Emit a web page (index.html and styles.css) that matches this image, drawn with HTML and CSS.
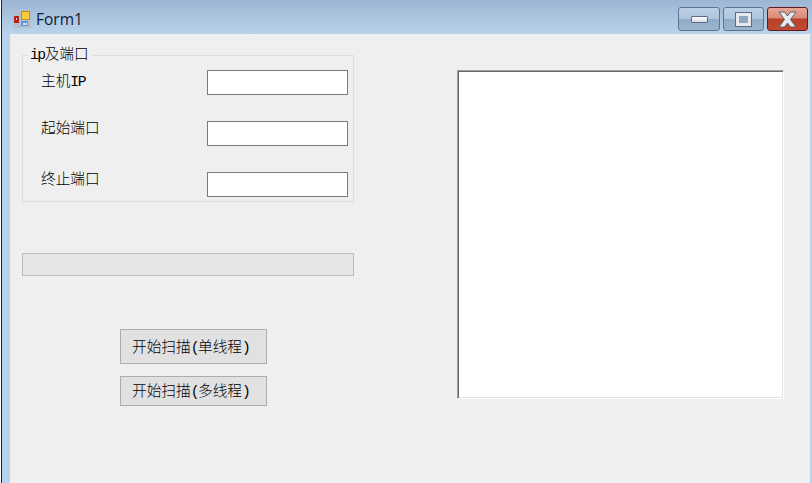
FILE: index.html
```html
<!DOCTYPE html>
<html lang="en">
  <head>
    <meta charset="UTF-8" />
    <title>Form1</title>
    <link rel="stylesheet" href="styles.css">
  </head>
  <body>
    <div class="window">
      <div class="titlebar">
        <svg class="app-icon" width="18" height="18" viewBox="0 0 18 18">
          <rect x="0" y="0" width="18" height="18" fill="#b4bfcc" />
          <rect x="1" y="6" width="5" height="7" fill="#b3231b" />
          <rect x="3" y="8" width="1" height="2" fill="#f2c8b0" />
          <rect x="8.5" y="1.5" width="8" height="8" fill="#f5cc3c" stroke="#c08f2a" stroke-width="1" />
          <rect x="8" y="11" width="7" height="5" fill="#5f95e0" />
          <rect x="10" y="13" width="4" height="2" fill="#cfe0f6" />
        </svg>
        <span class="title">Form1</span>
        <div class="controls">
          <div class="ctl">
            <span class="ctl-min"></span>
          </div>
          <div class="ctl">
            <span class="ctl-max"></span>
          </div>
          <div class="ctl ctl-close">
            <svg width="19" height="17" viewBox="0 0 19 17">
              <path d="M1 1h5.5l3 4 3-4H18l-5.5 7.5L18 16h-5.5l-3-4-3 4H1l5.5-7.5z" fill="#e9ebef" stroke="#566074" stroke-width="1" stroke-linejoin="round" />
            </svg>
          </div>
        </div>
      </div>

      <div class="client">
        <div class="left-col">
          <fieldset class="group">
            <legend><span class="latin">ip</span>及端口</legend>
            <div class="row row-first">
              <label>主机<span class="latin">IP</span></label>
              <input type="text" />
            </div>
            <div class="row">
              <label>起始端口</label>
              <input type="text" />
            </div>
            <div class="row">
              <label>终止端口</label>
              <input type="text" />
            </div>
          </fieldset>

          <div class="progress"></div>

          <div class="buttons">
            <button class="btn-tall">开始扫描<span class="latin">(</span>单线程<span class="latin">)</span></button>
            <button class="btn-short">开始扫描<span class="latin">(</span>多线程<span class="latin">)</span></button>
          </div>
        </div>

        <div class="output"></div>
      </div>
    </div>
  </body>
</html>
```

FILE: styles.css
```css
* {
  box-sizing: border-box;
}

body {
  margin: 0;
  padding-left: 1px;
  width: 812px;
  height: 483px;
  overflow: hidden;
  background-color: #fff;
  font-family: "Noto Sans CJK SC", "Liberation Mono", monospace;
  font-size: 14.67px;
  font-weight: 300;
  color: #000;
}

.latin {
  font-family: "Liberation Mono", monospace;
  font-size: 14.67px;
  font-weight: 400;
  letter-spacing: -1.47px;
}

.window {
  width: 811px;
  height: 483px;
  display: flex;
  flex-direction: column;
  background: linear-gradient(to bottom, #9cb6d3, #bad3ec 34px);
  border-left: 1px solid #222;
}

.titlebar {
  height: 34px;
  display: flex;
  align-items: flex-start;
  padding-left: 11px;
}

.app-icon {
  margin-top: 10px;
}

.title {
  margin-top: 9px;
  margin-left: 5px;
  font-family: "Open Sans", "Liberation Sans", sans-serif;
  font-size: 15.5px;
  font-weight: 400;
  line-height: 20px;
  color: #0d1b33;
}

.controls {
  margin-left: auto;
  margin-right: 4px;
  margin-top: 7px;
  display: flex;
  gap: 3px;
}

.ctl {
  width: 41px;
  height: 24px;
  border: 1px solid #5e7390;
  border-radius: 3px;
  background: linear-gradient(to bottom, #bcd0e6 0%, #b0c6de 48%, #91aac6 50%, #9db5cf 100%);
  display: flex;
  align-items: center;
  justify-content: center;
}

.ctl:first-child {
  width: 42px;
}

.ctl-close {
  border-color: #5f1a24;
  background: linear-gradient(to bottom, #e8a596 0%, #dc8a78 45%, #b8412a 50%, #c0492f 100%);
}

.ctl-min {
  width: 17px;
  height: 7px;
  margin-top: 1px;
  background: linear-gradient(to bottom, #fff, #d6d9df);
  border: 1px solid #5c6b85;
  border-radius: 1px;
}

.ctl-max {
  width: 17px;
  height: 15px;
  border: 1px solid #5c6b85;
  background-color: #8fa6c2;
  box-shadow: inset 0 0 0 3px #e8eaee;
}

.client {
  flex: 1;
  margin: 0 2px 0 8px;
  background-color: #efefef;
  display: flex;
  align-items: flex-start;
  padding-left: 12px;
}

.left-col {
  width: 332px;
  display: flex;
  flex-direction: column;
}

.group {
  margin: 12px 0 0;
  padding: 0 5px;
  height: 156px;
  border: 1px solid #dedede;
}

.group legend {
  height: 18px;
  padding: 0 3px 0 2px;
  line-height: 13px;
}

.row {
  height: 51px;
  padding-left: 13px;
  display: flex;
  justify-content: space-between;
  align-items: flex-start;
}

.row-first {
  margin-top: 6px;
}

.row label {
  line-height: 20px;
  margin-top: -4px;
}

.row-first label {
  margin-top: 0;
}

.row input {
  width: 141px;
  height: 25px;
  border: 1px solid #7a7a7a;
  background-color: #fff;
}

.progress {
  margin-top: 51px;
  height: 23px;
  border: 1px solid #bcbcbc;
  background-color: #e6e6e6;
}

.buttons {
  margin-top: 53px;
  margin-left: 98px;
  display: flex;
  flex-direction: column;
  gap: 12px;
}

.buttons button {
  width: 147px;
  padding: 0 0 3px 11px;
  border: 1px solid #adadad;
  background-color: #e1e1e1;
  font-family: inherit;
  font-size: inherit;
  font-weight: inherit;
  color: #000;
  text-align: left;
}

.btn-tall {
  height: 35px;
}

.btn-short {
  height: 30px;
}

.output {
  width: 327px;
  height: 329px;
  margin-top: 36px;
  margin-left: 103px;
  background-color: #fff;
  border-style: solid;
  border-width: 1px;
  border-color: #a0a0a0 #fff #fff #a0a0a0;
  box-shadow: inset 1px 1px 0 #696969, inset -1px -1px 0 #e3e3e3;
}
```
